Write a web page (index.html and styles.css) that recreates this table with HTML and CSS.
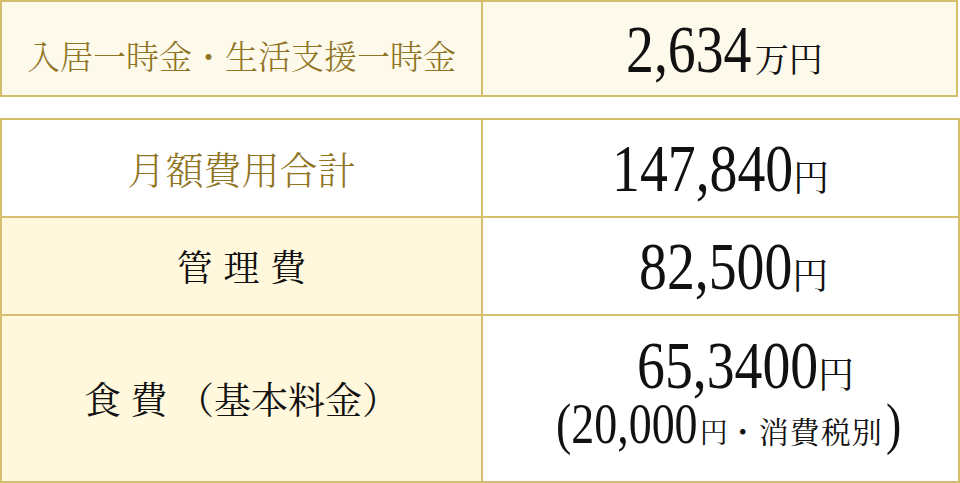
FILE: index.html
```html
<!DOCTYPE html>
<html lang="ja">
<head>
<meta charset="utf-8">
<title>費用</title>
<link rel="stylesheet" href="styles.css">
</head>
<body>
<div class="page">
  <div class="tbl tbl-top">
    <div class="cell label label-top gold">入居一時金・生活支援一時金</div>
    <div class="cell value value-top">
      <span class="line"><span class="num n5">2,634</span><span class="unit unit-man">万円</span></span>
    </div>
  </div>

  <div class="tbl tbl-main">
    <div class="cell label label-big gold">月額費用合計</div>
    <div class="cell value">
      <span class="line"><span class="num n7">147,840</span><span class="unit">円</span></span>
    </div>

    <div class="cell label cream label-spaced">管理費</div>
    <div class="cell value value-kanri">
      <span class="line"><span class="num n6">82,500</span><span class="unit">円</span></span>
    </div>

    <div class="cell label cream label-food">食 費 （基本料金）</div>
    <div class="cell value value-food">
      <span class="line line-main"><span class="num n7">65,3400</span><span class="unit">円</span></span>
      <span class="line line-sub"><span class="num num-sm s7">(20,000</span><span class="unit unit-sm">円</span><span class="note">・消費税別</span><span class="num num-sm s1">)</span></span>
    </div>
  </div>
</div>
</body>
</html>
```

FILE: styles.css
```css
html, body {
  margin: 0;
  padding: 0;
  background: #ffffff;
}

body {
  font-family: "Noto Serif CJK JP", "Noto Sans CJK JP", serif;
  color: #111111;
}

.page {
  width: 960px;
  height: 483px;
  display: flex;
  flex-direction: column;
  overflow: hidden;
}

.tbl {
  display: grid;
  background: #d5be6e;
  padding: 2px;
  gap: 2px;
  box-sizing: border-box;
}

.tbl-top {
  width: 958px;
  height: 97px;
  grid-template-columns: 479px 473px;
  grid-template-rows: 93px;
}

.tbl-main {
  margin-top: 21px;
  width: 960px;
  height: 365px;
  grid-template-columns: 479px 475px;
  grid-template-rows: 96px 96px 165px;
}

.cell {
  display: flex;
  align-items: center;
  justify-content: center;
  background: #ffffff;
  box-sizing: border-box;
}

.tbl-top .cell {
  background: #fdf9eb;
}

.cell.cream {
  background: #fff8dc;
}

.gold {
  color: #8f7422;
  font-weight: 300;
}

.label {
  line-height: 1;
  white-space: nowrap;
}

.label-top {
  font-size: 33px;
  padding-top: 12px;
}

.label-big {
  font-size: 38px;
}

.label-spaced {
  font-size: 36px;
  letter-spacing: 0.3em;
  padding-left: 0.3em;
}

.label-food {
  font-size: 37px;
}

.value {
  flex-direction: column;
  line-height: 1;
}

.line {
  display: flex;
  align-items: baseline;
  white-space: nowrap;
}

.num {
  display: inline-block;
  font-family: "Liberation Serif", "Times New Roman", serif;
  font-size: 68px;
  line-height: 1;
  transform: scaleX(0.82);
  transform-origin: left center;
}

/* compensation for the horizontal squeeze: -(1-0.82) * advance width */
.n5 { margin-right: -0.405em; }
.n6 { margin-right: -0.495em; }
.n7 { margin-right: -0.585em; }

.num-sm {
  font-size: 56px;
}

.s7 { margin-right: -0.555em; }
.s1 { margin-right: -0.06em; }

.unit {
  font-size: 36px;
  line-height: 1;
}

.unit-man {
  font-size: 34px;
  margin-left: 3px;
}

.unit-sm {
  font-size: 28px;
  margin-left: 2px;
}

.note {
  font-size: 30px;
  letter-spacing: 1px;
  line-height: 1;
  margin-right: 3px;
}

.value-top {
  padding-left: 10px;
}

.value-kanri {
  padding-left: 26px;
}

.value-food {
  padding-bottom: 14px;
}

.line-main {
  padding-left: 50px;
}

.line-sub {
  margin-top: -3px;
  padding-left: 16px;
}
```
